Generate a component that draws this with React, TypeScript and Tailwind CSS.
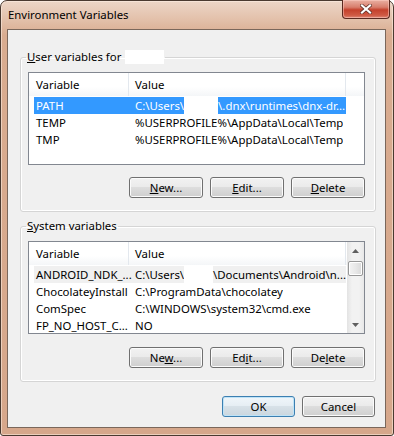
import React from "react";

type Row = { name: string; value: React.ReactNode; state?: "sel" | "dim" };

const userRows: Row[] = [
  {
    name: "PATH",
    state: "sel",
    value: (
      <>
        <span>C:\Users\</span>
        <span className="inline-block h-[17px] w-[34px] bg-white" />
        <span>\.dnx\runtimes\dnx-dr...</span>
      </>
    ),
  },
  { name: "TEMP", value: "%USERPROFILE%\\AppData\\Local\\Temp" },
  { name: "TMP", value: "%USERPROFILE%\\AppData\\Local\\Temp" },
];

const systemRows: Row[] = [
  {
    name: "ANDROID_NDK_...",
    state: "dim",
    value: (
      <>
        <span>C:\Users\</span>
        <span className="inline-block h-[17px] w-[37px] bg-white" />
        <span>\Documents\Android\n...</span>
      </>
    ),
  },
  { name: "ChocolateyInstall", value: "C:\\ProgramData\\chocolatey" },
  { name: "ComSpec", value: "C:\\WINDOWS\\system32\\cmd.exe" },
  { name: "FP_NO_HOST_C...", value: "NO" },
];

function Btn({ children, w, primary }: { children: React.ReactNode; w: string; primary?: boolean }) {
  return (
    <button
      className={`${w} flex h-[21px] items-center justify-center rounded-[3px] border text-[11.4px] leading-none text-black ${
        primary
          ? "border-[#3c7fb1] bg-[linear-gradient(to_bottom,#f0f6fa_0%,#e6eef4_45%,#d7e1e8_50%,#cbd6de_100%)] shadow-[inset_0_0_0_1px_#bfe3f7]"
          : "border-[#707070] bg-[linear-gradient(to_bottom,#f2f2f2_0%,#ebebeb_45%,#dddddd_50%,#cfcfcf_100%)] shadow-[inset_0_0_0_1px_#fbfbfb]"
      }`}
    >
      {children}
    </button>
  );
}

function ListBox({ rows, scroll }: { rows: Row[]; scroll?: boolean }) {
  return (
    <div className="flex h-[93px] w-full overflow-hidden border border-[#828790] bg-white">
      <div className="min-w-0 flex-1">
        {/* header */}
        <div className="flex h-[23px] items-stretch bg-[linear-gradient(to_bottom,#ffffff_0%,#ffffff_60%,#f4f6f8_100%)] text-[11.4px]">
          <div className="flex w-[100px] items-center border-r border-[#e3e8ee] pl-[7px]">Variable</div>
          <div className="flex w-[217px] items-center border-r border-[#e3e8ee] pl-[6px]">Value</div>
        </div>
        <div className="mt-[1px]">
          {rows.map((r) => (
            <div
              key={r.name}
              className={`ml-[5px] flex h-[17px] w-[312px] items-stretch whitespace-nowrap text-[11.4px] leading-[17px] ${
                r.state === "sel" ? "bg-[#3399ff] text-white" : r.state === "dim" ? "bg-[#f0f0f0] text-black" : "text-black"
              }`}
            >
              <div className="w-[99px] shrink-0 overflow-hidden pl-[2px]">{r.name}</div>
              <div className="flex items-stretch overflow-hidden pl-[2px]">{r.value}</div>
            </div>
          ))}
        </div>
      </div>
      {scroll ? (
        <div className="flex w-[17px] shrink-0 flex-col items-center bg-[linear-gradient(to_right,#e3e3e3,#f2f2f2_30%,#f2f2f2_70%,#e8e8e8)]">
          <div className="flex h-[17px] w-full items-center justify-center">
            <svg width="7" height="4" viewBox="0 0 7 4"><path d="M3.5 0L7 4H0z" fill="#606060" /></svg>
          </div>
          <div className="mt-[2px] h-[15px] w-[15px] rounded-[2px] border border-[#979797] bg-[linear-gradient(to_right,#f3f3f3,#e8e8e8_50%,#d9d9d9)] shadow-[inset_0_0_0_1px_#ffffff]" />
          <div className="flex-1" />
          <div className="flex h-[17px] w-full items-center justify-center">
            <svg width="7" height="4" viewBox="0 0 7 4"><path d="M0 0H7L3.5 4z" fill="#606060" /></svg>
          </div>
        </div>
      ) : null}
    </div>
  );
}

export default function App() {
  return (
    <div className="h-[436px] w-[394px] bg-white [font-family:'Noto_Sans',sans-serif]">
      <div className="flex h-[436px] w-[394px] flex-col rounded-t-[7px] rounded-b-[3px] border border-[#4a3a30] bg-[linear-gradient(to_bottom,#ecd6c7_0px,#e3c1ab_18px,#d9ac90_34px,#d6a78b_100%)] shadow-[inset_0_0_0_1px_rgba(255,240,230,0.55)]">
        {/* title bar */}
        <div className="flex h-[28px] shrink-0 items-start justify-between pl-[7px] pr-[3px]">
          <span className="mt-[6px] text-[11.4px] leading-[16px] text-black">Environment Variables</span>
          <button className="-mt-px flex h-[19px] w-[48px] items-center justify-center rounded-b-[4px] border border-t-0 border-[#5a2a20] bg-[linear-gradient(to_bottom,#eab0a2_0%,#d87e6c_40%,#c4412c_55%,#cf5a44_85%,#dd8a78_100%)] shadow-[inset_0_0_0_1px_rgba(255,210,200,0.5)]">
            <svg width="12" height="10" viewBox="0 0 12 10">
              <path d="M2 1.5L10 8.5M10 1.5L2 8.5" stroke="#5b2d25" strokeWidth="3.6" strokeLinecap="square" />
              <path d="M2 1.5L10 8.5M10 1.5L2 8.5" stroke="#ffffff" strokeWidth="2.2" strokeLinecap="square" />
            </svg>
          </button>
        </div>

        {/* client area */}
        <div className="mb-[7px] ml-[6px] mr-[7px] flex flex-1 flex-col border border-[#7a675b] bg-[#f0f0f0] pl-[12px] pr-[9px] text-black">
          <fieldset className="mt-[19px] rounded-[3px] border border-[#d5d5d5] shadow-[inset_0_0_0_1px_#ffffff]">
            <legend className="ml-[5px] flex items-center px-[1px] text-[11.4px] leading-[16px]">
              <span>
                <span className="underline">U</span>ser variables for
              </span>
              <span className="ml-[4px] inline-block h-[14px] w-[39px] bg-white" />
            </legend>
            <div className="pl-[7px] pr-[10px] pb-[13px]">
              <div className="mt-[7px]">
                <ListBox rows={userRows} />
              </div>
              <div className="mt-[12px] flex justify-end gap-[7px]">
                <Btn w="w-[74px]"><span><span className="underline">N</span>ew...</span></Btn>
                <Btn w="w-[74px]"><span><span className="underline">E</span>dit...</span></Btn>
                <Btn w="w-[74px]"><span><span className="underline">D</span>elete</span></Btn>
              </div>
            </div>
          </fieldset>

          <fieldset className="mt-[6px] rounded-[3px] border border-[#d5d5d5] shadow-[inset_0_0_0_1px_#ffffff]">
            <legend className="ml-[5px] px-[1px] text-[11.4px] leading-[16px]">
              <span className="underline">S</span>ystem variables
            </legend>
            <div className="pl-[7px] pr-[10px] pb-[13px]">
              <div className="mt-[7px]">
                <ListBox rows={systemRows} scroll />
              </div>
              <div className="mt-[13px] flex justify-end gap-[7px]">
                <Btn w="w-[74px]"><span>Ne<span className="underline">w</span>...</span></Btn>
                <Btn w="w-[74px]"><span>Ed<span className="underline">i</span>t...</span></Btn>
                <Btn w="w-[74px]"><span>De<span className="underline">l</span>ete</span></Btn>
              </div>
            </div>
          </fieldset>

          <div className="mr-[1px] mt-[14px] flex justify-end gap-[7px]">
            <Btn w="w-[73px]" primary>OK</Btn>
            <Btn w="w-[73px]">Cancel</Btn>
          </div>
        </div>
      </div>
    </div>
  );
}
